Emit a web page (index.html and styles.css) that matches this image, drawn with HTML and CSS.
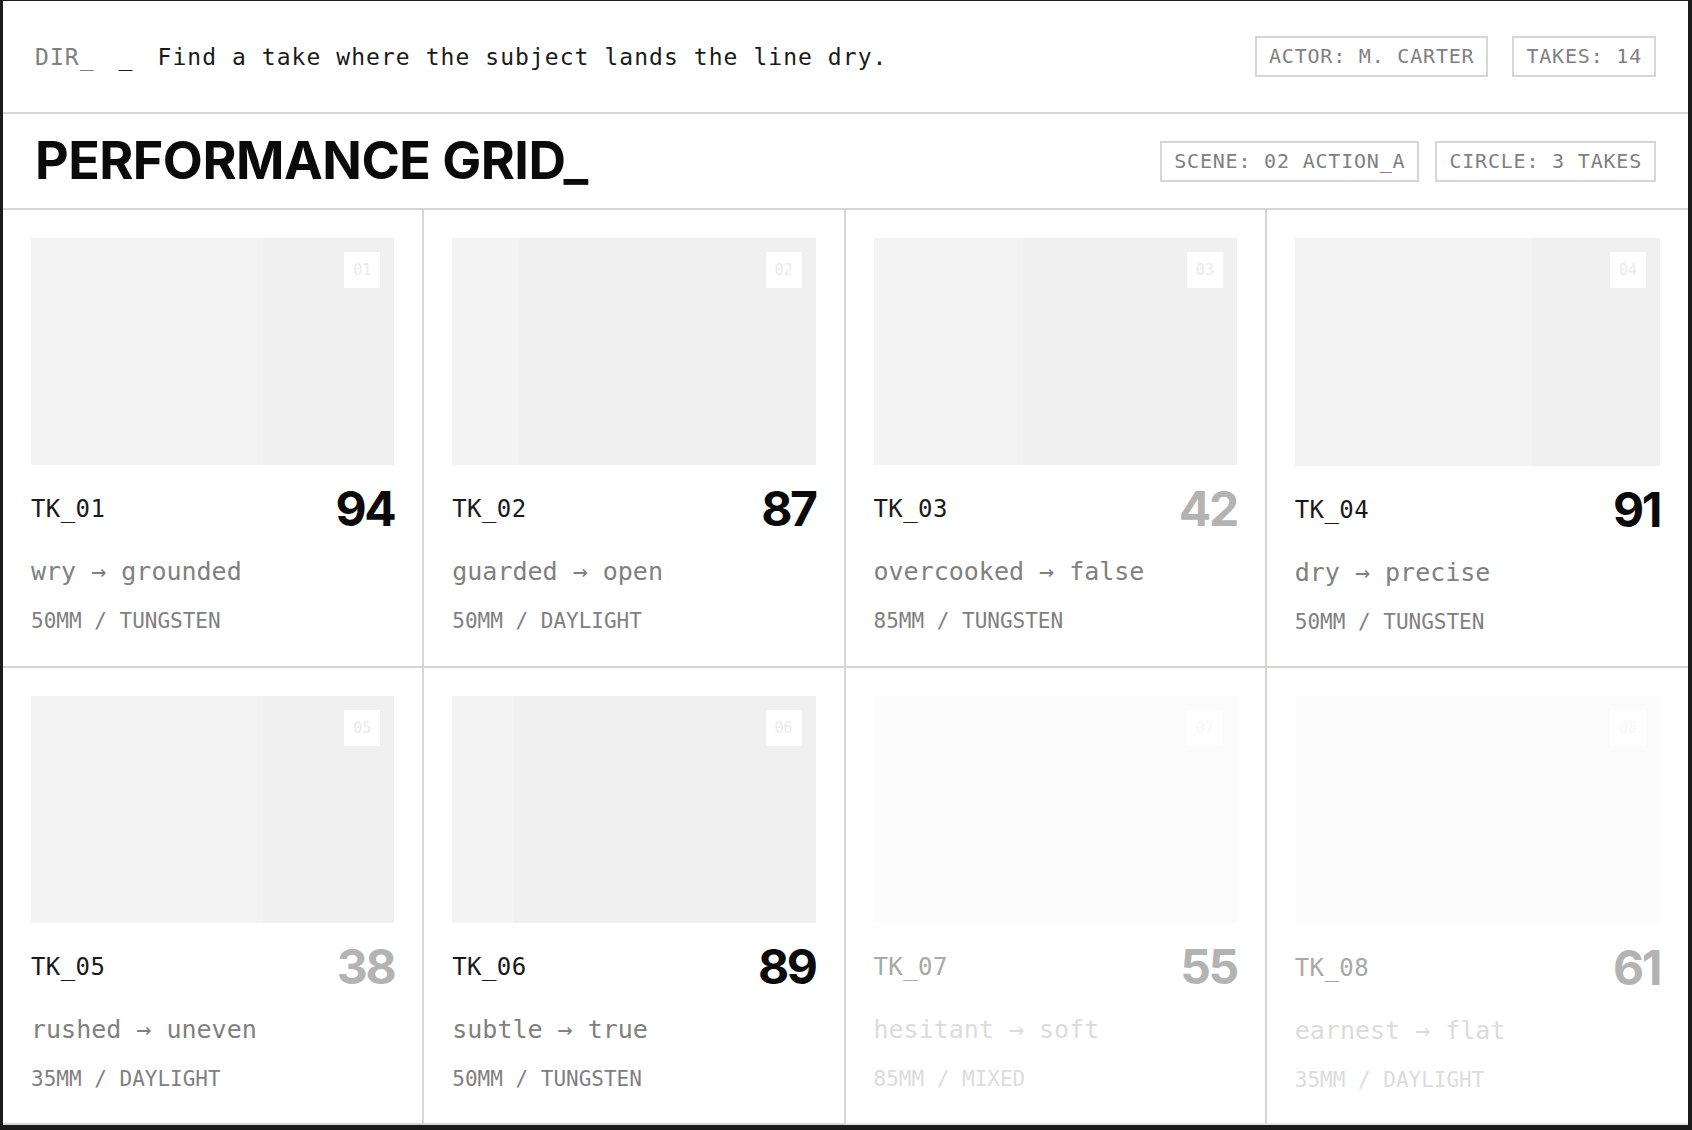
FILE: index.html
```html
<!doctype html>
<html lang="en">
<head>
	<meta charset="UTF-8">
	<title>Performance Grid</title>
	<link rel="stylesheet" href="styles.css">
</head>
<body>
	<div class="board">
		<div class="brief">
			<div class="brief-line">
				<span class="brief-label">DIR_</span>
				<span class="brief-cursor">_</span>
				<span class="brief-text">Find a take where the subject lands the line dry.</span>
			</div>
			<div class="tags tags-wide">
				<span class="tag">ACTOR: M. CARTER</span>
				<span class="tag">TAKES: 14</span>
			</div>
		</div>
		<div class="titlebar">
			<h1>PERFORMANCE GRID_</h1>
			<div class="tags">
				<span class="tag">SCENE: 02 ACTION_A</span>
				<span class="tag">CIRCLE: 3 TAKES</span>
			</div>
		</div>
		<div class="grid">
			<div class="take">
				<div class="frame" style="--split: 64%"><span class="frame-no">01</span></div>
				<div class="take-head">
					<span class="take-id">TK_01</span>
					<span class="score">94</span>
				</div>
				<div class="read">wry → grounded</div>
				<div class="specs">50MM / TUNGSTEN</div>
			</div>
			<div class="take">
				<div class="frame" style="--split: 18%"><span class="frame-no">02</span></div>
				<div class="take-head">
					<span class="take-id">TK_02</span>
					<span class="score">87</span>
				</div>
				<div class="read">guarded → open</div>
				<div class="specs">50MM / DAYLIGHT</div>
			</div>
			<div class="take">
				<div class="frame" style="--split: 41%"><span class="frame-no">03</span></div>
				<div class="take-head">
					<span class="take-id">TK_03</span>
					<span class="score low">42</span>
				</div>
				<div class="read">overcooked → false</div>
				<div class="specs">85MM / TUNGSTEN</div>
			</div>
			<div class="take">
				<div class="frame" style="--split: 65%"><span class="frame-no">04</span></div>
				<div class="take-head">
					<span class="take-id">TK_04</span>
					<span class="score">91</span>
				</div>
				<div class="read">dry → precise</div>
				<div class="specs">50MM / TUNGSTEN</div>
			</div>
			<div class="take">
				<div class="frame" style="--split: 64%"><span class="frame-no">05</span></div>
				<div class="take-head">
					<span class="take-id">TK_05</span>
					<span class="score low">38</span>
				</div>
				<div class="read">rushed → uneven</div>
				<div class="specs">35MM / DAYLIGHT</div>
			</div>
			<div class="take">
				<div class="frame" style="--split: 17%"><span class="frame-no">06</span></div>
				<div class="take-head">
					<span class="take-id">TK_06</span>
					<span class="score">89</span>
				</div>
				<div class="read">subtle → true</div>
				<div class="specs">50MM / TUNGSTEN</div>
			</div>
			<div class="take dim">
				<div class="frame" style="--split: 40%"><span class="frame-no">07</span></div>
				<div class="take-head">
					<span class="take-id">TK_07</span>
					<span class="score low">55</span>
				</div>
				<div class="read">hesitant → soft</div>
				<div class="specs">85MM / MIXED</div>
			</div>
			<div class="take dim">
				<div class="frame" style="--split: 60%"><span class="frame-no">08</span></div>
				<div class="take-head">
					<span class="take-id">TK_08</span>
					<span class="score low">61</span>
				</div>
				<div class="read">earnest → flat</div>
				<div class="specs">35MM / DAYLIGHT</div>
			</div>
		</div>
	</div>
</body>
</html>
```

FILE: styles.css
```css
html, body {
	height: 100%;
}
body {
	margin: 0;
	padding: 1px 4px 5px 3px;
	box-sizing: border-box;
	background: #1c1c1c;
}
.board {
	height: 100%;
	display: flex;
	flex-direction: column;
	background: #fff;
	color: #1a1a1a;
	font-family: "DejaVu Sans Mono", "Liberation Mono", monospace;
}

/* top strip: director note + counters */
.brief {
	height: 111px;
	flex: none;
	display: flex;
	align-items: center;
	justify-content: space-between;
	padding: 0 32px;
	border-bottom: 2px solid #d6d6d2;
}
.brief-line {
	display: flex;
	gap: 24px;
	font-size: 23px;
	letter-spacing: 1.05px;
}
.brief-label {
	color: #808080;
}
.tags {
	display: flex;
	gap: 16px;
}
.tags-wide {
	gap: 24px;
}
.tag {
	border: 2px solid #d6d6d2;
	padding: 6px 12px;
	font-size: 20px;
	line-height: 25px;
	letter-spacing: 0.8px;
	color: #808080;
}

/* title row */
.titlebar {
	height: 94px;
	flex: none;
	display: flex;
	align-items: center;
	justify-content: space-between;
	padding: 0 32px;
	border-bottom: 2px solid #d6d6d2;
}
.titlebar h1 {
	margin: 0;
	font-family: Inter, "Liberation Sans", sans-serif;
	font-weight: 700;
	font-size: 52px;
	line-height: 1;
	letter-spacing: -0.01em;
	color: #0a0a0a;
}

/* takes */
.grid {
	flex: 1;
	display: grid;
	grid-template-columns: repeat(4, 1fr);
	grid-template-rows: repeat(2, 1fr);
	min-height: 0;
}
.take {
	min-width: 0;
	padding: 28px;
	border-right: 2px solid #d6d6d2;
	border-bottom: 2px solid #d6d6d2;
}
.take:nth-child(4n) {
	border-right: none;
}
.frame {
	position: relative;
	aspect-ratio: 16 / 10;
	background: linear-gradient(90deg, #f3f3f3 var(--split), #f0f0f0 var(--split));
}
.frame-no {
	position: absolute;
	top: 14px;
	right: 14px;
	width: 36px;
	height: 36px;
	display: flex;
	align-items: center;
	justify-content: center;
	background: #fff;
	font-size: 15px;
	color: #ebebeb;
}
.take-head {
	display: flex;
	align-items: center;
	justify-content: space-between;
	margin-top: 20px;
}
.take-id {
	font-size: 24px;
	line-height: 1;
	letter-spacing: 0.4px;
}
.score {
	font-family: Inter, "Liberation Sans", sans-serif;
	font-weight: 700;
	font-size: 48px;
	line-height: 1;
	letter-spacing: -0.05em;
	color: #0a0a0a;
}
.score.low {
	color: #b3b3b3;
}
.read {
	margin-top: 24px;
	font-size: 25px;
	line-height: 30px;
	color: #808080;
}
.specs {
	margin-top: 22px;
	font-size: 21px;
	line-height: 25px;
	color: #808080;
}

/* takes not yet reviewed */
.take.dim {
	border-bottom-color: #e6e6e4;
}
.take.dim .frame {
	background: linear-gradient(90deg, #fcfcfc var(--split), #fbfbfb var(--split));
}
.take.dim .frame-no {
	color: #f7f7f7;
}
.take.dim .take-id {
	color: #a8a8a8;
}
.take.dim .read,
.take.dim .specs {
	color: #dcdcdc;
}
```
